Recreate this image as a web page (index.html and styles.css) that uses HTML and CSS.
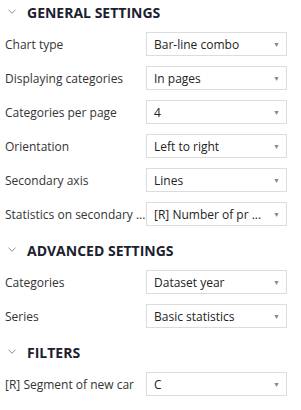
FILE: index.html
```html
<!DOCTYPE html>
<html lang="en">
<head>
  <meta charset="UTF-8">
  <title>Settings</title>
  <link rel="stylesheet" href="styles.css">
</head>
<body>
  <div class="panel">
    <div class="section">
      <div class="head">
        <svg class="caret" width="8" height="5" viewBox="0 0 8 5"><path d="M0.5 0.8 L4 4.2 L7.5 0.8" fill="none" stroke="#8a8f99" stroke-width="1"/></svg>
        <span>GENERAL SETTINGS</span>
      </div>
      <div class="row"><span class="label">Chart type</span><div class="select"><span class="val">Bar-line combo</span><span class="arrow">&#9660;</span></div></div>
      <div class="row"><span class="label">Displaying categories</span><div class="select"><span class="val">In pages</span><span class="arrow">&#9660;</span></div></div>
      <div class="row"><span class="label">Categories per page</span><div class="select"><span class="val">4</span><span class="arrow">&#9660;</span></div></div>
      <div class="row"><span class="label">Orientation</span><div class="select"><span class="val">Left to right</span><span class="arrow">&#9660;</span></div></div>
      <div class="row"><span class="label">Secondary axis</span><div class="select"><span class="val">Lines</span><span class="arrow">&#9660;</span></div></div>
      <div class="row"><span class="label">Statistics on secondary ...</span><div class="select"><span class="val">[R] Number of pr ...</span><span class="arrow">&#9660;</span></div></div>
    </div>
    <div class="section">
      <div class="head">
        <svg class="caret" width="8" height="5" viewBox="0 0 8 5"><path d="M0.5 0.8 L4 4.2 L7.5 0.8" fill="none" stroke="#8a8f99" stroke-width="1"/></svg>
        <span>ADVANCED SETTINGS</span>
      </div>
      <div class="row"><span class="label">Categories</span><div class="select"><span class="val">Dataset year</span><span class="arrow">&#9660;</span></div></div>
      <div class="row"><span class="label">Series</span><div class="select"><span class="val">Basic statistics</span><span class="arrow">&#9660;</span></div></div>
    </div>
    <div class="section">
      <div class="head">
        <svg class="caret" width="8" height="5" viewBox="0 0 8 5"><path d="M0.5 0.8 L4 4.2 L7.5 0.8" fill="none" stroke="#8a8f99" stroke-width="1"/></svg>
        <span>FILTERS</span>
      </div>
      <div class="row"><span class="label">[R] Segment of new car</span><div class="select"><span class="val">C</span><span class="arrow">&#9660;</span></div></div>
    </div>
  </div>
</body>
</html>
```

FILE: styles.css
```css
html,body{margin:0;padding:0;background:#fff;}
body{font-family:"Open Sans","Noto Sans",sans-serif;color:#333;}

.panel{padding:1px 14px 0 5px;}

.head{display:flex;align-items:center;height:22px;padding-left:3px;margin-bottom:9px;}
.head span{font-weight:700;font-size:14px;color:#1c2130;}
.caret{margin-right:11px;margin-top:-2px;}

.section + .section{margin-top:13px;}

.row{display:grid;grid-template-columns:141px 141px;height:24px;margin-bottom:10px;align-items:center;}
.label{font-size:12px;color:#333;white-space:nowrap;}

.select{display:flex;align-items:center;height:22px;border:1px solid #dcdcdc;padding:0 6px 0 7px;}
.val{flex:1;font-size:12px;color:#222;white-space:nowrap;}
.arrow{font-size:7px;color:#888;}
```
